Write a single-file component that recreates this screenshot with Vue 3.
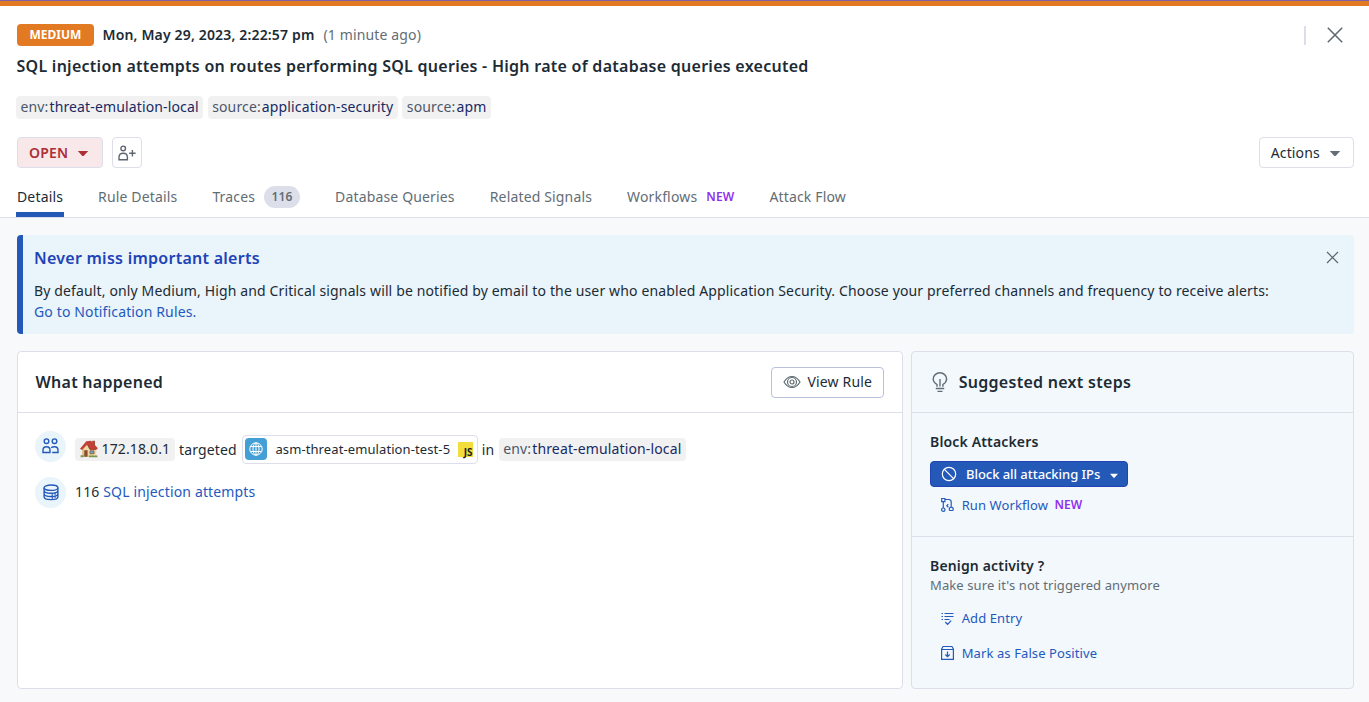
<script setup>
const tags = [
  { key: 'env', value: 'threat-emulation-local' },
  { key: 'source', value: 'application-security' },
  { key: 'source', value: 'apm' },
]
const tabs = [
  { label: 'Details', active: true },
  { label: 'Rule Details' },
  { label: 'Traces', count: 116 },
  { label: 'Database Queries' },
  { label: 'Related Signals' },
  { label: 'Workflows', isNew: true },
  { label: 'Attack Flow' },
]
</script>

<template>
  <div class="panel">
    <header class="head">
      <div class="row meta">
        <span class="severity">MEDIUM</span>
        <span class="date">Mon, May 29, 2023, 2:22:57 pm</span>
        <span class="ago">(1 minute ago)</span>
        <span class="divider"></span>
        <svg class="close" width="16" height="16" viewBox="0 0 16 16"><path d="M.8 .8 15.2 15.2M15.2 .8 .8 15.2" /></svg>
      </div>
      <h1 class="title">SQL injection attempts on routes performing SQL queries - High rate of database queries executed</h1>
      <div class="row tags">
        <span v-for="t in tags" :key="t.value" class="tag"><span class="key">{{ t.key }}:</span><span class="val">{{ t.value }}</span></span>
      </div>
      <div class="row controls">
        <button class="btn open">OPEN<svg width="12" height="7" viewBox="0 0 12 7"><path d="M.8 1h10.400L7.100 5.600q-1.100 1-2.200 0z" /></svg></button>
        <button class="btn assign">
          <svg width="18" height="16" viewBox="0 0 18 16"><circle cx="5.2" cy="3.4" r="2.3" /><path d="M1 14.7v-2.4C1 9.6 2.6 8.2 5.2 8.2s4.2 1.4 4.2 4.1v2.4zM11.2 8.2h6.4M14.4 5v6.4" /></svg>
        </button>
        <button class="btn actions">Actions<svg width="12" height="7" viewBox="0 0 12 7"><path d="M.8 1h10.400L7.100 5.600q-1.100 1-2.200 0z" /></svg></button>
      </div>
      <nav class="tabs">
        <span v-for="t in tabs" :key="t.label" class="tab" :class="{ active: t.active }">
          <span>{{ t.label }}</span>
          <span v-if="t.count" class="count">{{ t.count }}</span>
          <span v-if="t.isNew" class="new">NEW</span>
        </span>
      </nav>
    </header>

    <main class="body">
      <section class="banner">
        <h2>Never miss important alerts</h2>
        <p>By default, only Medium, High and Critical signals will be notified by email to the user who enabled Application Security. Choose your preferred channels and frequency to receive alerts:</p>
        <a>Go to Notification Rules.</a>
        <svg class="dismiss" width="13" height="13" viewBox="0 0 13 13"><path d="M1 1 12 12M12 1 1 12" /></svg>
      </section>

      <div class="cards">
        <section class="card what">
          <div class="card-head">
            <h3>What happened</h3>
            <button class="btn view">
              <svg width="18" height="14" viewBox="0 0 18 14"><path d="M1 7C3.2 3.3 5.8 1.5 9 1.5S14.800 3.3 17 7c-2.200 3.700-4.800 5.500-8 5.500S3.200 10.700 1 7z" /><circle cx="9" cy="7" r="4.500" /><circle cx="9" cy="7" r="2" /></svg>
              View Rule
            </button>
          </div>
          <div class="events">
            <div class="event">
              <span class="bubble people">
                <svg width="17" height="16" viewBox="0 0 17 16"><circle cx="4.500" cy="3.200" r="2.300" /><circle cx="12.500" cy="3.200" r="2.300" /><path d="M1 14.500v-2.300Q1 8.700 4.500 8.700T8 12.200v2.300zM9.200 9.700Q10.300 8.700 12.500 8.700q3.500 0 3.500 3.500v2.300H10.200" /></svg>
              </span>
              <span class="ip">
                <svg width="20" height="19" viewBox="0 0 20 19">
                  <path d="M13.200 1.800h2.800v6h-2.800z" fill="#a04a38" />
                  <path d="M3.200 8.500 8.500 3.500l8.800 6v8.300H3.200z" fill="#f0d9a4" />
                  <path d="M3.200 9h1.600v8.800H3.200z" fill="#d9bd86" />
                  <path d="M1 9.800 7.300 2.300 12 1.800 18.900 9.200l-1.500 1.200H11L8.300 5.500 3 10.900z" fill="#c04136" />
                  <path d="M8.300 5.500 11 10.400l6.400-.1" fill="none" stroke="#8e302b" stroke-width=".8" />
                  <path d="M5.200 11.200h3.400v6.600H5.200z" fill="#8a4f30" />
                  <path d="M11 11.800h4v3h-4z" fill="#5ba4cf" stroke="#94633f" stroke-width=".9" />
                  <path d="M1.600 16.300h3v1.900h-3zM9.700 16.600h8.700v1.600H9.700z" fill="#77994b" />
                </svg>172.18.0.1
              </span>
              <span class="word targeted">targeted</span>
              <span class="service">
                <span class="globe"><svg width="14" height="14" viewBox="0 0 14 14"><circle cx="7" cy="7" r="6.200" /><ellipse cx="7" cy="7" rx="3" ry="6.200" /><path d="M1.500 4.500h11M1.500 9.500h11M7 1v12" /></svg></span>
                <span class="name">asm-threat-emulation-test-5</span>
                <span class="js">JS</span>
              </span>
              <span class="word in">in</span>
              <span class="tag env"><span class="key">env:</span><span class="val">threat-emulation-local</span></span>
            </div>
            <div class="event">
              <span class="bubble">
                <svg width="16" height="17" viewBox="0 0 16 17"><ellipse cx="8" cy="3.700" rx="6.900" ry="2.700" /><path d="M1.100 3.700v9c0 1.600 3 2.900 6.900 2.900s6.900-1.300 6.900-2.900v-9M1.100 6.500c0 1.500 3 2.700 6.900 2.700s6.900-1.200 6.900-2.700M1.100 9.800c0 1.500 3 2.700 6.900 2.700s6.900-1.200 6.900-2.700M9.300 10.200v1.200M12.100 9.500v1.200M9.300 13.300v1.200M12.100 12.600v1.200" /></svg>
              </span>
              <span class="attempts">116 <a>SQL injection attempts</a></span>
            </div>
          </div>
        </section>

        <section class="card next">
          <div class="card-head">
            <svg class="bulb" width="16" height="21" viewBox="0 0 16 21"><path d="M5 14.800v-2.300C2.500 11 1.200 9.300 1.200 7A6.700 6.200 0 0 1 14.600 7c0 2.300-1.300 4-3.700 5.500v2.300M8 7v7.500M3.800 16.500h8.400M5.500 19.400h5" /></svg>
            <h3>Suggested next steps</h3>
          </div>
          <div class="step block">
            <h4>Block Attackers</h4>
            <button class="primary">
              <svg class="ban" width="16" height="16" viewBox="0 0 16 16"><circle cx="8" cy="8" r="6.700" /><path d="m3.200 3.200 9.600 9.600" /></svg>
              <span>Block all attacking IPs</span>
              <svg class="caret" width="10" height="6" viewBox="0 0 10 6"><path d="M1 .8h8L5.700 4.600q-.7.700-1.400 0z" /></svg>
            </button>
            <a class="link run">
              <svg width="15" height="16" viewBox="0 0 15 16"><path d="M1.700 1.500h3.200v3.200H1.700zM3.300 4.700v6.200M4.900 2.500h3.800q2.500 0 2.500 2.500v4.700M8.300 7.200 6.800 8.700l1.600 1.500" /><circle cx="3.300" cy="12.700" r="1.700" /><path d="M9.300 12.500a2 2 0 1 1 3.900 0q0 1-1 1H10.300q-1 0-1-1z" /></svg>
              <span>Run Workflow</span><span class="new">NEW</span>
            </a>
          </div>
          <div class="step benign">
            <h4>Benign activity ?</h4>
            <p>Make sure it's not triggered anymore</p>
            <a class="link add">
              <svg width="15" height="15" viewBox="0 0 15 15"><path d="M4.500 2.500h9M4.500 5.500h9M4.500 8.500h5M1.500 2.500h1.500M1.500 5.500h1.500M1.500 8.500h1.500M5.300 11l2.300 2.400 3.500-3.800" /></svg>
              <span>Add Entry</span>
            </a>
            <a class="link mark">
              <svg width="15" height="16" viewBox="0 0 15 16"><path d="M1.600 4 3.100 1.500h8.800L13.400 4v10.400H1.600zM1.600 4.500H13.400M7.500 6.500v5M5.300 9.500l2.200 2.200 2.200-2.200" /></svg>
              <span>Mark as False Positive</span>
            </a>
          </div>
        </section>
      </div>
    </main>
  </div>
</template>

<style>
body { margin: 0; background: #f8f9fc; overflow: hidden; }
</style>

<style scoped>
* { box-sizing: border-box; }
.panel { height: 702px; background: #f8f9fb; color: #1c2b34; font: 14px/20px "Noto Sans", sans-serif; letter-spacing: .137px; border-top: 1px solid #7d62a8; white-space: nowrap; }
h1, h2, h3, h4, p { margin: 0; }
svg { fill: none; stroke: currentColor; flex: none; }
a { color: #2459bd; }
.head { height: 217px; background: #fff; border-top: 5px solid #e27a23; border-bottom: 1px solid #dcdfea; padding-top: 17px; display: flex; flex-direction: column; }
.row { display: flex; align-items: center; padding: 0 15px 0 17px; flex: none; }
.meta { height: 24px; }
.severity { width: 77px; height: 22px; margin-right: 8.500px; border-radius: 4px; background: #e27a23; color: #fff; font-weight: 700; font-size: 12px; line-height: 22px; text-align: center; letter-spacing: 0; }
.date { font-weight: 600; letter-spacing: .16px; }
.ago { margin-left: 9px; color: #626d75; }
.divider { width: 2px; height: 19px; margin-left: auto; background: #dcdfea; }
.close { margin: 0 11px 1px 21px; color: #5d666e; stroke-width: 1.5; }
.title { height: 22px; margin: 8px 0 0 16.500px; font-size: 16px; line-height: 22px; font-weight: 600; letter-spacing: .265px; }
.tags { margin-top: 19px; padding-left: 16px; gap: 4.500px; height: 23px; }
.tag { height: 23px; line-height: 22px; padding: 0 4.5px; background: #f1f1f2; border-radius: 4px; }
.key { color: #4c5768; }
.val { color: #172a63; margin-left: 1px; }
.controls { margin-top: 18px; height: 31px; }
.btn { display: flex; align-items: center; height: 31px; padding: 0; background: #fff; border: 1px solid #dcdfea; border-radius: 4px; color: #1c2b34; font: 14px/20px "Noto Sans", sans-serif; letter-spacing: .137px; }
.open { width: 86px; padding-left: 11px; gap: 9px; background: #f9e8ea; color: #ac2f36; font-weight: 600; letter-spacing: .2px; }
.open svg, .actions svg { fill: currentColor; stroke: none; margin-top: 1px; }
.assign { width: 30px; margin-left: 9px; justify-content: center; color: #5d666e; }
.assign svg { stroke-width: 1.4; }
.actions { width: 95px; margin-left: auto; padding-left: 10.700px; gap: 9px; }
.actions svg { color: #626d75; }
.tabs { display: flex; gap: 35px; height: 49px; padding-left: 17px; color: #626d75; letter-spacing: .155px; }
.tab { display: flex; align-items: center; height: 49px; padding-top: 9px; position: relative; }
.active { color: #1c2b34; }
.active::after { content: ""; position: absolute; left: -1px; right: -1px; bottom: 0; height: 5px; background: #2459b8; }
.count { width: 36px; height: 22px; margin-left: 9px; border-radius: 11px; background: #dcdfea; font-size: 12px; line-height: 21px; font-weight: 600; text-align: center; }
.new { color: #902ff0; font-weight: 600; font-size: 12px; margin-left: 9px; }
.body { padding: 17px 15px 0 17px; }
.banner { position: relative; height: 99px; background: #e9f4fb; border-left: 6px solid #2459b8; border-radius: 4px; padding: 12px 0 0 11px; }
.banner h2 { color: #2043b5; font-size: 16px; line-height: 22px; font-weight: 600; letter-spacing: .26px; }
.banner p { margin-top: 11px; line-height: 21px; }
.banner a { display: block; line-height: 21px; }
.dismiss { position: absolute; right: 15px; top: 16px; color: #5d666e; stroke-width: 1.2; }
.cards { display: grid; grid-template-columns: 886px 443px; gap: 8px; margin-top: 17px; height: 338px; }
.card { background: #fff; border: 1px solid #dcdfea; border-radius: 4px; }
.card-head { display: flex; align-items: center; height: 61px; padding: 0 18px 0 17.500px; border-bottom: 1px solid #dcdfea; }
.card-head h3 { font-size: 16px; line-height: 22px; font-weight: 600; letter-spacing: .28px; }
.view { width: 113px; margin-left: auto; padding-left: 11px; gap: 6.500px; border-color: #b9c0dc; letter-spacing: .15px; }
.view svg { color: #626d75; stroke-width: 1.2; }
.events { padding: 18px 17px; display: flex; flex-direction: column; gap: 15px; }
.event { display: flex; align-items: center; height: 31px; }
.bubble { width: 31px; height: 31px; display: flex; align-items: center; justify-content: center; border-radius: 50%; background: #e9f4fb; color: #2459b8; }
.bubble svg { stroke-width: 1.4; }
.people svg { margin-bottom: 2px; }
.ip { display: flex; align-items: center; width: 100px; height: 23px; margin: 5px 0 0 9px; padding: 0 4px 1px; gap: 2.500px; background: #f1f1f2; border-radius: 4px; }
.ip svg { stroke: none; }
.word { margin-top: 6px; }
.targeted { margin-left: 4px; }
.service { display: flex; align-items: center; width: 236px; height: 29px; margin: 6px 0 0 5px; padding-left: 2px; border: 1px solid #dcdfea; border-radius: 4px; font-size: 13px; letter-spacing: .1px; }
.globe { width: 22px; height: 22px; display: flex; align-items: center; justify-content: center; border-radius: 4px; background: #439fd5; color: #fff; margin-bottom: 1px; }
.name { margin: 0 0 1px 8.700px; }
.js { margin: 0 0 1px 8.300px; width: 15px; height: 15px; background: #f3dd3c; color: #1c1c1c; font: 700 10px/20px "Noto Sans", sans-serif; letter-spacing: 0; text-align: right; padding-right: 1px; }
.in { margin-left: 4px; }
.env { margin: 5px 0 0 4.500px; }
.attempts { margin: 0 0 2px 9px; letter-spacing: .15px; }
.next { background: #f2f8fc; }
.bulb { margin: 0 10.700px 0 2.500px; color: #626d75; stroke-width: 1.4; }
.step { padding-left: 18px; }
.step h4 { font-size: 14px; line-height: 20px; font-weight: 600; letter-spacing: .16px; }
.block { height: 124px; padding-top: 19px; border-bottom: 1px solid #dcdfea; }
.primary { display: flex; align-items: center; width: 198px; height: 26px; margin-top: 9px; padding: 0 0 0 9.500px; background: #2459b8; color: #fff; border: 1px solid #2043b5; border-radius: 4px; font: 500 13px/18px "Noto Sans", sans-serif; letter-spacing: -.045px; }
.primary span { margin-left: 9.500px; }
.ban { stroke-width: 1.2; }
.caret { margin: 3px 0 0 9px; fill: currentColor; stroke: none; }
.link { display: flex; align-items: center; height: 18px; margin-left: 10px; font-size: 13px; letter-spacing: .1px; }
.link svg { margin-right: 6.700px; stroke-width: 1.2; }
.run { margin-top: 9px; }
.run .new { margin-left: 6.300px; }
.benign { padding-top: 19px; }
.benign p { font-size: 13px; line-height: 19px; color: #626d75; letter-spacing: .1px; }
.add { margin-top: 14px; }
.mark { margin-top: 17px; }
</style>
